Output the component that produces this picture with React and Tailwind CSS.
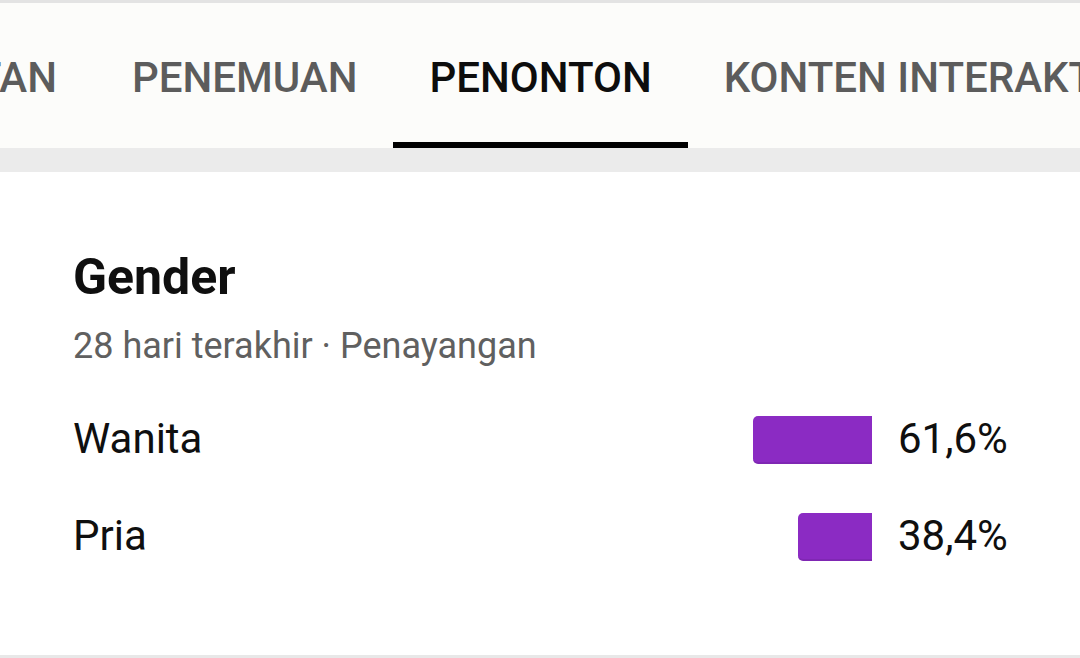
import React from 'react';

const tabs = [
  { label: 'PENEMUAN', active: false },
  { label: 'PENONTON', active: true },
  { label: 'KONTEN INTERAKTIF', active: false },
];

const rows = [
  { label: 'Wanita', pct: 61.6, text: '61,6%' },
  { label: 'Pria', pct: 38.4, text: '38,4%' },
];

function Tab({ label, active }) {
  return (
    <div className="relative h-full flex items-center px-[36px] shrink-0 whitespace-nowrap">
      <span className={active ? 'text-[#0d0d0d]' : 'text-[#5c5c5c]'}>{label}</span>
      {active && <div className="absolute left-0 right-0 bottom-0 h-[6px] bg-black" />}
    </div>
  );
}

export default function App() {
  return (
    <div className="w-[1080px] h-[658px] overflow-hidden bg-white flex flex-col" style={{ fontFamily: 'Roboto, "Liberation Sans", sans-serif' }}>
      <div className="h-[3px] bg-[#e3e3e3]" />
      {/* tab strip */}
      <div className="h-[145px] bg-[#fcfcfa] flex overflow-hidden text-[42px] font-medium pt-[3px]">
        <div className="w-[57px] shrink-0 flex justify-end items-center whitespace-nowrap text-[#5c5c5c] mr-[39px]">
          TAN
        </div>
        {tabs.map((t) => (
          <Tab key={t.label} {...t} />
        ))}
      </div>
      <div className="h-[24px] bg-[#ebebeb]" />

      {/* gender card */}
      <div className="flex-1 flex flex-col pl-[73px] pt-[80px]">
        <h2 className="text-[50px] font-bold leading-none text-[#0f0f0f]">Gender</h2>
        <p className="mt-[26px] text-[36px] leading-none text-[#606060]">28 hari terakhir · Penayangan</p>
        <div className="mt-[52px] flex flex-col gap-[49px]">
          {rows.map((r) => (
            <div key={r.label} className="h-[48px] flex items-center">
              <span className="flex-1 text-[42px] leading-none mb-[3px] text-[#0f0f0f]">{r.label}</span>
              <div className="w-[120px] h-full flex justify-end">
                <div
                  className="h-full bg-[#8b2bc3] rounded-l-[5px] border-b-2 border-[#7f27b3]"
                  style={{ width: `${(r.pct / 61.6) * 119}px` }}
                />
              </div>
              <span className="w-[208px] pl-[26px] text-[42px] leading-none mb-[3px] text-[#0f0f0f]">{r.text}</span>
            </div>
          ))}
        </div>
      </div>
      <div className="h-[3px] bg-[#e8e8e8]" />
    </div>
  );
}
